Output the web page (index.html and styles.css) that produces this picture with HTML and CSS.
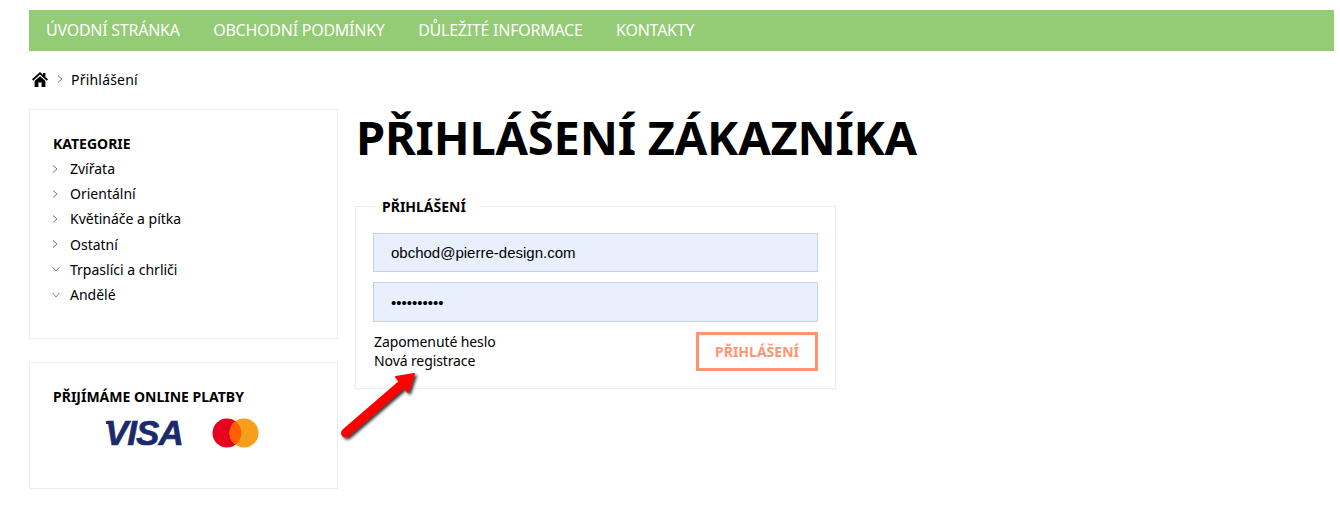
FILE: index.html
```html
<!DOCTYPE html>
<html lang="cs">
<head>
    <meta charset="UTF-8">
    <meta name="viewport" content="width=device-width, initial-scale=1.0">
    <title>Přihlášení zákazníka</title>
    <link rel="stylesheet" href="styles.css">
</head>
<body>
    <nav class="topnav">
        <a href="#">ÚVODNÍ STRÁNKA</a>
        <a href="#">OBCHODNÍ PODMÍNKY</a>
        <a href="#">DŮLEŽITÉ INFORMACE</a>
        <a href="#">KONTAKTY</a>
    </nav>

    <div class="breadcrumb">
        <svg class="home" viewBox="0 0 16 15" width="16" height="15">
            <path d="M8 0 L11 2.7 V1 H13.4 V4.9 L16 7.3 L14.8 8.7 L8 2.6 L1.2 8.7 L0 7.3 Z" fill="#000"/>
            <path d="M8 4.2 L13.4 9 V15 H9.6 V10.6 H6.4 V15 H2.6 V9 Z" fill="#000"/>
        </svg>
        <svg class="chev" viewBox="0 0 6 8" width="6" height="8"><path d="M1 .5 L5 4 L1 7.5" /></svg>
        <span>Přihlášení</span>
    </div>

    <div class="columns">
        <aside class="sidebar">
            <section class="box box-cats">
                <h3>KATEGORIE</h3>
                <ul class="cats">
                    <li><svg class="chev" viewBox="0 0 6 8" width="6" height="8"><path d="M1 .5 L5 4 L1 7.5" /></svg><a href="#">Zvířata</a></li>
                    <li><svg class="chev" viewBox="0 0 6 8" width="6" height="8"><path d="M1 .5 L5 4 L1 7.5" /></svg><a href="#">Orientální</a></li>
                    <li><svg class="chev" viewBox="0 0 6 8" width="6" height="8"><path d="M1 .5 L5 4 L1 7.5" /></svg><a href="#">Květináče a pítka</a></li>
                    <li><svg class="chev" viewBox="0 0 6 8" width="6" height="8"><path d="M1 .5 L5 4 L1 7.5" /></svg><a href="#">Ostatní</a></li>
                    <li><svg class="chev down" viewBox="0 0 8 6" width="8" height="6"><path d="M.5 1 L4 5 L7.5 1" /></svg><a href="#">Trpaslíci a chrliči</a></li>
                    <li><svg class="chev down" viewBox="0 0 8 6" width="8" height="6"><path d="M.5 1 L4 5 L7.5 1" /></svg><a href="#">Andělé</a></li>
                </ul>
            </section>
            <section class="box box-pay">
                <h3>PŘIJÍMÁME ONLINE PLATBY</h3>
                <div class="pay-logos">
                    <span class="visa">VISA</span>
                    <svg class="mc" viewBox="0 0 47 30" width="47" height="30">
                        <circle cx="15" cy="15" r="14.5" fill="#e8001f"/>
                        <circle cx="32" cy="15" r="14.5" fill="#f79e1b"/>
                        <path d="M23.5 3.3 A14.5 14.5 0 0 1 23.5 26.7 A14.5 14.5 0 0 1 23.5 3.3 Z" fill="#ff5f00"/>
                    </svg>
                </div>
            </section>
        </aside>

        <main class="content">
            <h1>PŘIHLÁŠENÍ ZÁKAZNÍKA</h1>
            <fieldset class="login">
                <legend>PŘIHLÁŠENÍ</legend>
                <input type="text" value="obchod@pierre-design.com">
                <input type="password" value="1234567890">
                <div class="login-foot">
                    <div class="login-links">
                        <a href="#">Zapomenuté heslo</a>
                        <a href="#">Nová registrace</a>
                    </div>
                    <button type="button">PŘIHLÁŠENÍ</button>
                </div>
            </fieldset>
            <svg class="arrow" viewBox="0 0 90 80" width="90" height="80">
                <defs>
                    <filter id="shadow" x="-20%" y="-20%" width="150%" height="150%">
                        <feDropShadow dx="2" dy="2" stdDeviation="1.5" flood-color="#000" flood-opacity=".8"/>
                    </filter>
                </defs>
                <g filter="url(#shadow)" fill="#f00">
                    <path d="M7.5 69 L62 22" stroke="#f00" stroke-width="9" stroke-linecap="round"/>
                    <path d="M58 13 L76 10 L70 28 Z" stroke="#f00" stroke-width="2" stroke-linejoin="round"/>
                </g>
            </svg>
        </main>
    </div>
</body>
</html>
```

FILE: styles.css
```css
body {
    margin: 10px 6px 0 29px;
    font-family: "Noto Sans", Arial, sans-serif;
    font-size: 14px;
    color: #000;
    background-color: #fff;
}
a {
    color: inherit;
    text-decoration: none;
}
.topnav {
    display: flex;
    gap: 33.5px;
    height: 41px;
    align-items: center;
    padding: 0 0 2px 17px;
    box-sizing: border-box;
    background-color: #94cb75;
    color: #fff;
    font-size: 16px;
    letter-spacing: -.25px;
}
.breadcrumb {
    display: flex;
    align-items: center;
    height: 58px;
    padding: 0 0 2px 3px;
    box-sizing: border-box;
}
.home {
    margin-right: 9px;
}
.chev {
    fill: none;
    stroke: #777;
    stroke-width: 1;
}
.breadcrumb span {
    margin-left: 8px;
    letter-spacing: .2px;
}
.columns {
    display: flex;
    gap: 17px;
}
.sidebar {
    width: 309px;
    flex: none;
}
.box {
    box-sizing: border-box;
    border: 1px solid #ececec;
    padding: 24px 23px;
}
.box h3 {
    margin: 0 0 2px;
    font-size: 14px;
    line-height: 20px;
    font-weight: 700;
}
.box-cats {
    height: 230px;
    margin-bottom: 23px;
}
.box-pay {
    height: 127px;
}
.cats {
    list-style: none;
    margin: 0;
    padding: 0;
}
.cats li {
    display: flex;
    align-items: center;
    height: 25.2px;
}
.cats .chev {
    margin-right: 12px;
    margin-left: -1px;
}
.cats .chev.down {
    margin-right: 10px;
    stroke: #5f8f9f;
}
.pay-logos {
    display: flex;
    align-items: center;
    gap: 29px;
    padding: 9px 0 0 52px;
}
.visa {
    position: relative;
    font-family: "Liberation Sans", Arial, sans-serif;
    font-style: italic;
    font-weight: 700;
    font-size: 35px;
    line-height: 30px;
    letter-spacing: -1px;
    color: #1a2a6c;
    -webkit-text-stroke: .6px #1a2a6c;
}
.visa::before {
    content: "";
    position: absolute;
    left: 1px;
    top: 3px;
    width: 7px;
    height: 3px;
    background-color: #1a2a6c;
}
.content {
    position: relative;
    flex: 1;
}
h1 {
    margin: 0 0 31px 1px;
    font-size: 47px;
    line-height: 57px;
    letter-spacing: -.2px;
    font-weight: 700;
}
.login {
    box-sizing: border-box;
    width: 481px;
    height: 192px;
    margin: 0;
    padding: 17px 17px 0;
    border: 1px solid #ececec;
    display: block;
}
.login legend {
    margin-left: 2px;
    padding: 0 15px 0 7px;
    font-size: 14px;
    font-weight: 700;
}
.login input {
    display: block;
    box-sizing: border-box;
    width: 445px;
    height: 39px;
    margin-bottom: 10px;
    padding: 0 17px;
    border: 1px solid #ccd2dc;
    background-color: #e8f0fe;
    font-family: "Liberation Sans", Arial, sans-serif;
    font-size: 15px;
    color: #000;
    outline: none;
}
.login input[type="password"] {
    height: 40px;
}
.login-foot {
    display: flex;
    justify-content: space-between;
}
.login-links {
    display: flex;
    flex-direction: column;
    line-height: 19px;
    letter-spacing: -.1px;
    margin-left: 1px;
}
.login button {
    box-sizing: border-box;
    width: 122px;
    height: 39px;
    padding: 0;
    border: 3px solid #ff9472;
    background-color: #fff;
    color: #ff9472;
    font-family: inherit;
    font-size: 14px;
    font-weight: 700;
}
.arrow {
    position: absolute;
    left: -17px;
    top: 255px;
}
```
